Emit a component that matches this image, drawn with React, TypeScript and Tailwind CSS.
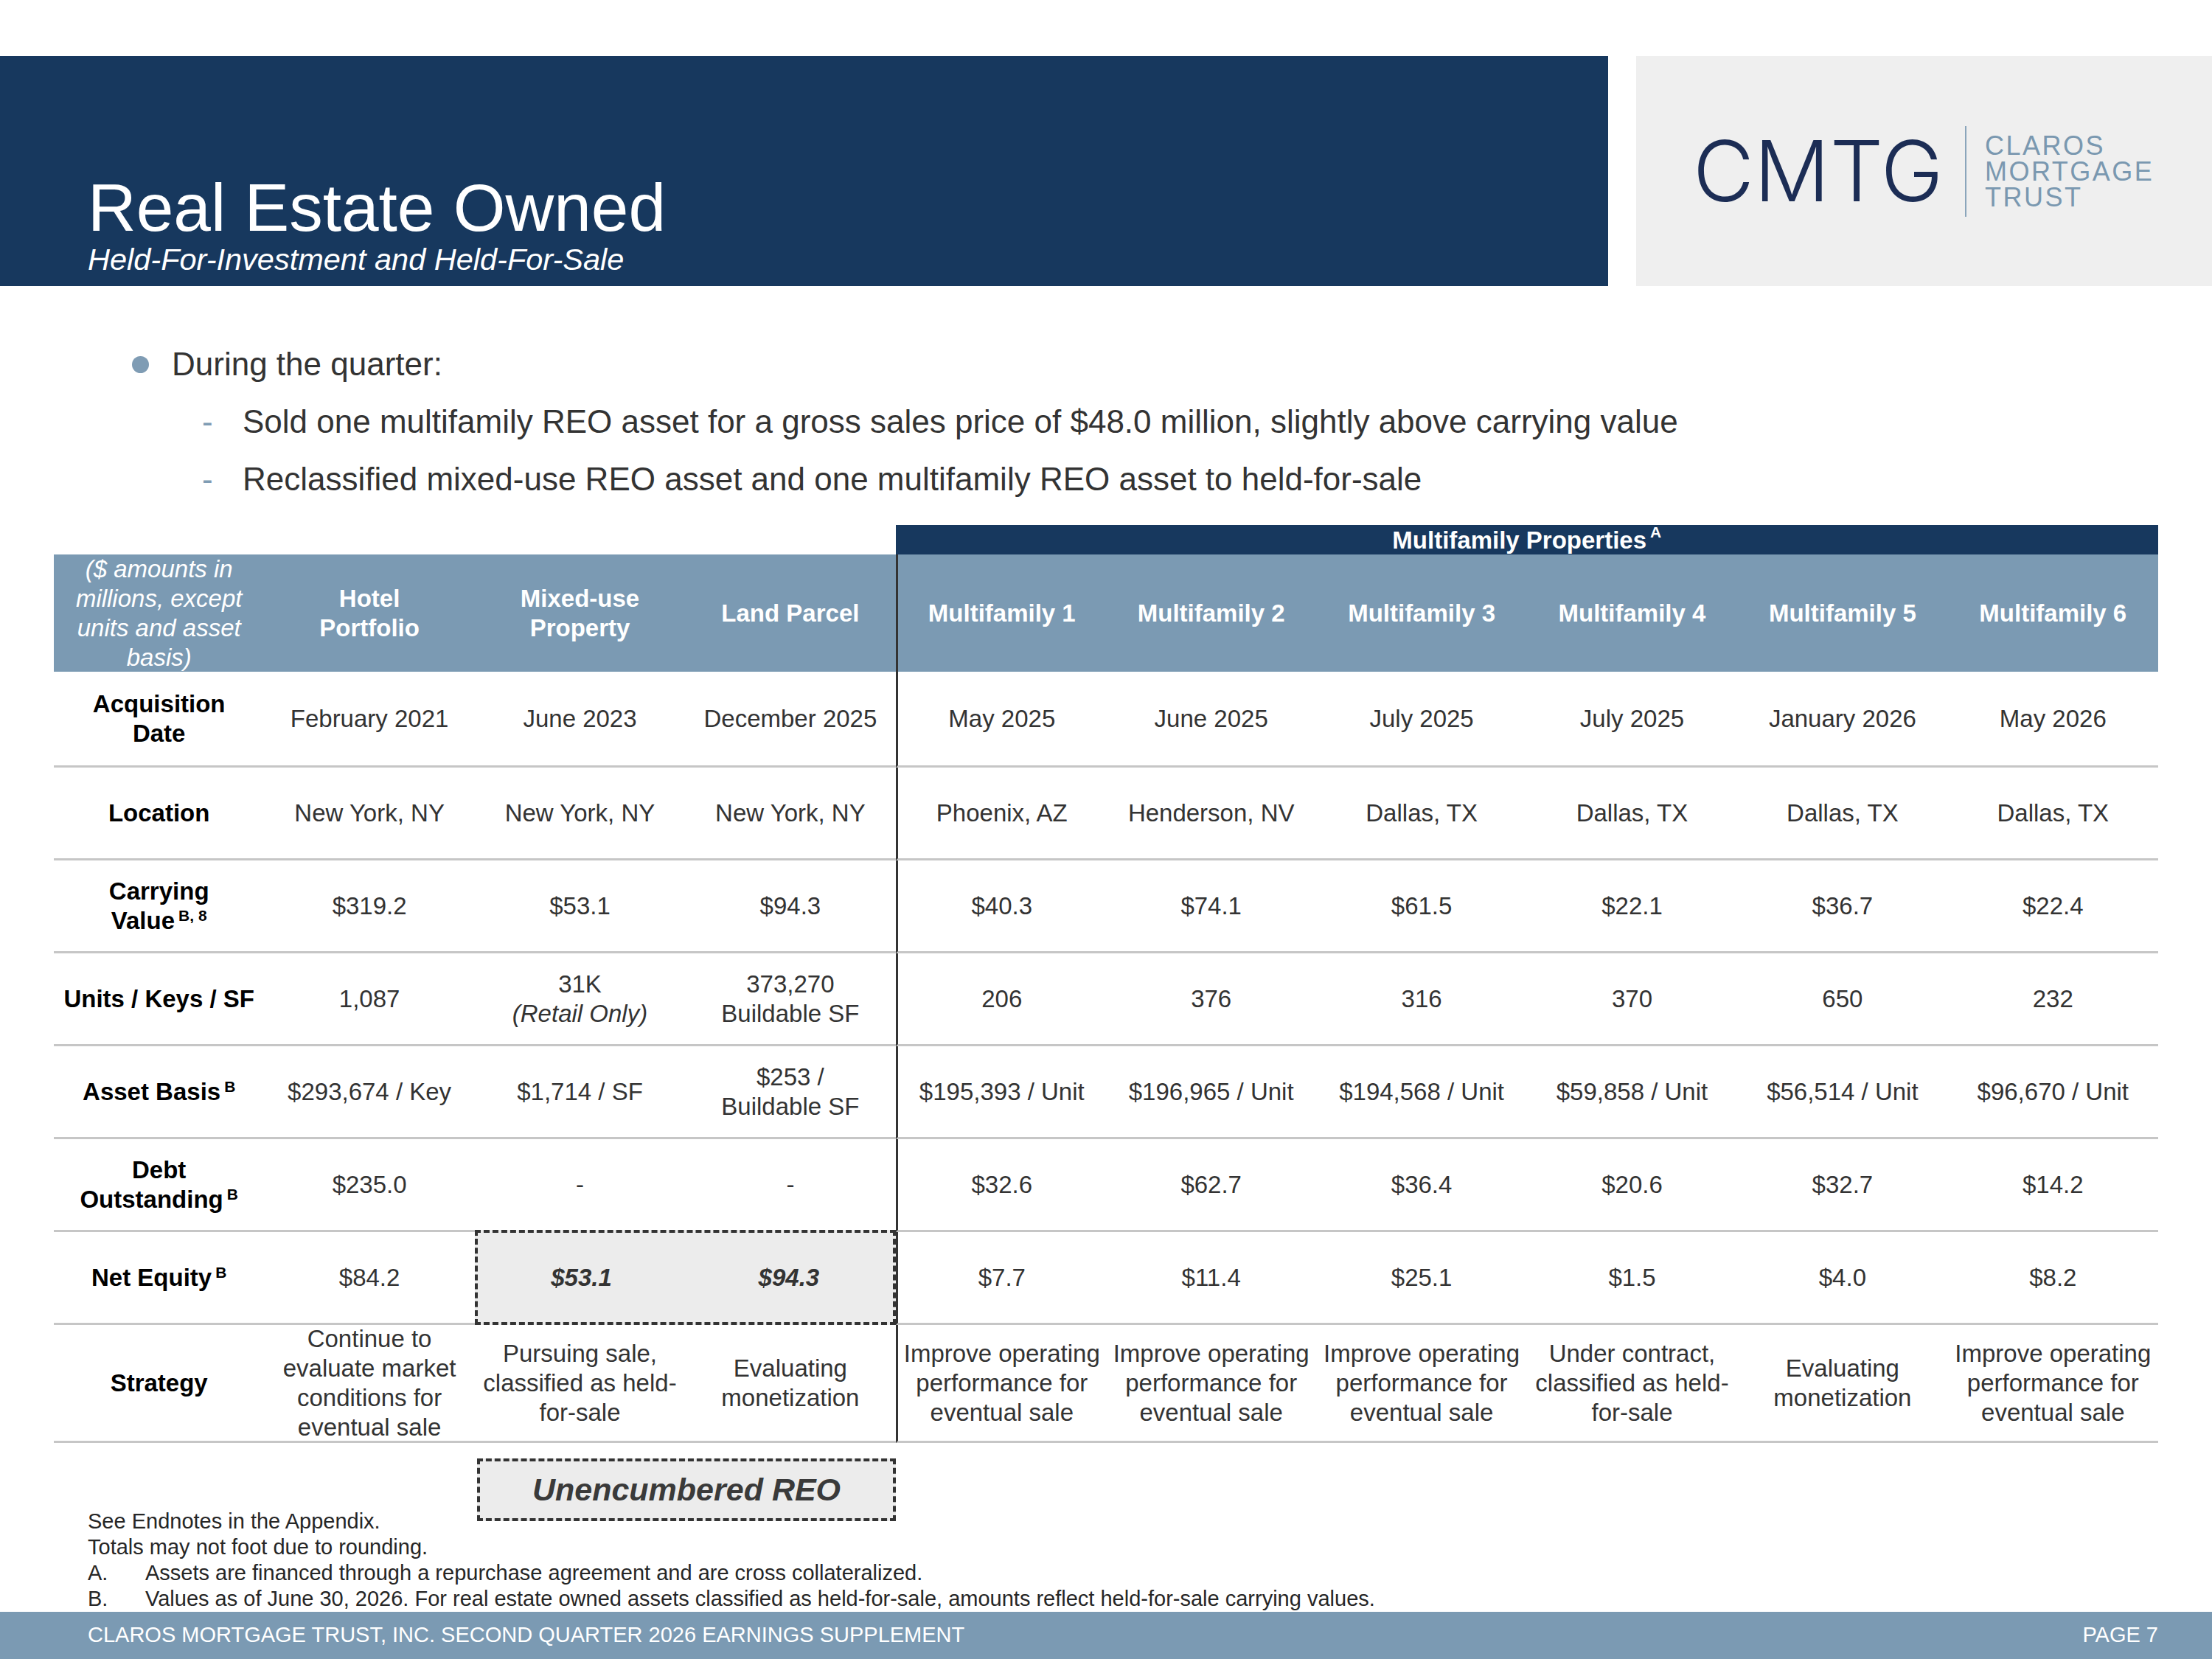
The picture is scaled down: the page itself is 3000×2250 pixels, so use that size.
import type { ReactNode } from "react";

type Row = {
  label: ReactNode;
  cells: ReactNode[];
};

function Sup({ children }: { children: ReactNode }) {
  return <sup className="ml-[5px] text-[21px]">{children}</sup>;
}

const rows: Row[] = [
  {
    label: (
      <>
        Acquisition
        <br />
        Date
      </>
    ),
    cells: [
      "February 2021",
      "June 2023",
      "December 2025",
      "May 2025",
      "June 2025",
      "July 2025",
      "July 2025",
      "January 2026",
      "May 2026",
    ],
  },
  {
    label: "Location",
    cells: [
      "New York, NY",
      "New York, NY",
      "New York, NY",
      "Phoenix, AZ",
      "Henderson, NV",
      "Dallas, TX",
      "Dallas, TX",
      "Dallas, TX",
      "Dallas, TX",
    ],
  },
  {
    label: (
      <>
        Carrying
        <br />
        Value<Sup>B, 8</Sup>
      </>
    ),
    cells: ["$319.2", "$53.1", "$94.3", "$40.3", "$74.1", "$61.5", "$22.1", "$36.7", "$22.4"],
  },
  {
    label: "Units / Keys / SF",
    cells: [
      "1,087",
      <>
        31K
        <br />
        <i>(Retail Only)</i>
      </>,
      <>
        373,270
        <br />
        Buildable SF
      </>,
      "206",
      "376",
      "316",
      "370",
      "650",
      "232",
    ],
  },
  {
    label: (
      <>
        Asset Basis<Sup>B</Sup>
      </>
    ),
    cells: [
      "$293,674 / Key",
      "$1,714 / SF",
      <>
        $253 /
        <br />
        Buildable SF
      </>,
      "$195,393 / Unit",
      "$196,965 / Unit",
      "$194,568 / Unit",
      "$59,858 / Unit",
      "$56,514 / Unit",
      "$96,670 / Unit",
    ],
  },
  {
    label: (
      <>
        Debt
        <br />
        Outstanding<Sup>B</Sup>
      </>
    ),
    cells: ["$235.0", "-", "-", "$32.6", "$62.7", "$36.4", "$20.6", "$32.7", "$14.2"],
  },
];

const strategies: string[][] = [
  ["Continue to", "evaluate market", "conditions for", "eventual sale"],
  ["Pursuing sale,", "classified as held-", "for-sale"],
  ["Evaluating", "monetization"],
  ["Improve operating", "performance for", "eventual sale"],
  ["Improve operating", "performance for", "eventual sale"],
  ["Improve operating", "performance for", "eventual sale"],
  ["Under contract,", "classified as held-", "for-sale"],
  ["Evaluating", "monetization"],
  ["Improve operating", "performance for", "eventual sale"],
];

const headers: ReactNode[] = [
  <>
    Hotel
    <br />
    Portfolio
  </>,
  <>
    Mixed-use
    <br />
    Property
  </>,
  "Land Parcel",
  "Multifamily 1",
  "Multifamily 2",
  "Multifamily 3",
  "Multifamily 4",
  "Multifamily 5",
  "Multifamily 6",
];

function Cell({
  col,
  height,
  label,
  children,
}: {
  col: number;
  height: "h-[126px]" | "h-[130px]" | "h-[160px]";
  label?: boolean;
  children: ReactNode;
}) {
  return (
    <div
      className={`flex ${height} items-center justify-center whitespace-nowrap border-b-[3px] border-b-[#c6c6c6] text-center leading-[40px] ${
        col === 4 ? "border-l-[3px] border-l-[#333333]" : ""
      } ${label ? "font-bold text-black" : "text-[#333333]"}`}
    >
      <div>{children}</div>
    </div>
  );
}

export default function App() {
  return (
    <div className="relative flex h-[2250px] w-[3000px] flex-col overflow-hidden bg-white font-['Liberation_Sans',Arial,sans-serif]">
      {/* Header */}
      <div className="mt-[76px] flex h-[312px]">
        <div className="w-[2181px] bg-[#17385e] pl-[119px] pt-[160px] text-white">
          <h1 className="text-[91px] leading-none">Real Estate Owned</h1>
          <p className="mt-[4px] text-[41.5px] italic leading-none">Held-For-Investment and Held-For-Sale</p>
        </div>
        <div className="ml-[38px] flex flex-1 items-center bg-[#efefef] pl-[77px]">
          <span className="w-[339px] font-['Inter',sans-serif] text-[114px] font-light leading-none text-[#1c2d55]">
            CMTG
          </span>
          <div className="ml-[30px] h-[123px] w-[2px] bg-[#8aa5bb]" />
          <div className="ml-[25px] text-[36px] leading-[35px] tracking-[2.5px] text-[#7a98b0]">
            <div>CLAROS</div>
            <div>MORTGAGE</div>
            <div>TRUST</div>
          </div>
        </div>
      </div>

      {/* Bullets */}
      <div className="mt-[67px] text-[44px] leading-[78px] text-[#333333]">
        <div className="flex items-center pl-[179px]">
          <span className="h-[23px] w-[23px] rounded-full bg-[#7f9cb4]" />
          <span className="ml-[31px]">During the quarter:</span>
        </div>
        <div className="flex pl-[274px]">
          <span className="w-[55px] text-[#7f9cb4]">-</span>
          <span>Sold one multifamily REO asset for a gross sales price of $48.0 million, slightly above carrying value</span>
        </div>
        <div className="flex pl-[274px]">
          <span className="w-[55px] text-[#7f9cb4]">-</span>
          <span>Reclassified mixed-use REO asset and one multifamily REO asset to held-for-sale</span>
        </div>
      </div>

      {/* Table */}
      <div className="ml-[73px] mt-[23px] w-[2854px] text-[33px]">
        <div className="grid h-[40px] grid-cols-10">
          <div className="col-span-4" />
          <div className="col-span-6 flex items-center justify-center bg-[#17385e] font-bold leading-none text-white">
            Multifamily Properties<Sup>A</Sup>
          </div>
        </div>

        <div className="grid h-[159px] grid-cols-10 bg-[#7b9ab3] text-white">
          <div className="flex items-center justify-center text-center italic leading-[40px]">
            <div>
              ($ amounts in
              <br />
              millions, except
              <br />
              units and asset
              <br />
              basis)
            </div>
          </div>
          {headers.map((h, i) => (
            <div
              key={i}
              className={`flex items-center justify-center whitespace-nowrap text-center font-bold leading-[40px] ${
                i === 3 ? "border-l-[3px] border-l-[#333333]" : ""
              }`}
            >
              <div>{h}</div>
            </div>
          ))}
        </div>

        {rows.map((row, r) => (
          <div key={r} className="grid grid-cols-10">
            <Cell col={0} height={r === 0 ? "h-[130px]" : "h-[126px]"} label>
              {row.label}
            </Cell>
            {row.cells.map((c, i) => (
              <Cell key={i} col={i + 1} height={r === 0 ? "h-[130px]" : "h-[126px]"}>
                {c}
              </Cell>
            ))}
          </div>
        ))}

        {/* Net equity */}
        <div className="grid grid-cols-10">
          <Cell col={0} height="h-[126px]" label>
            Net Equity<Sup>B</Sup>
          </Cell>
          <Cell col={1} height="h-[126px]">
            $84.2
          </Cell>
          <div className="relative col-span-2 -mt-[3px] grid h-[129px] grid-cols-2 border-[4px] border-dashed border-[#333333] bg-[#ececec] font-bold italic text-[#333333]">
            <div className="flex items-center justify-center">$53.1</div>
            <div className="flex items-center justify-center">$94.3</div>
          </div>
          {["$7.7", "$11.4", "$25.1", "$1.5", "$4.0", "$8.2"].map((v, i) => (
            <Cell key={i} col={i + 4} height="h-[126px]">
              {v}
            </Cell>
          ))}
        </div>

        {/* Strategy */}
        <div className="grid grid-cols-10">
          <Cell col={0} height="h-[160px]" label>
            Strategy
          </Cell>
          {strategies.map((lines, i) => (
            <Cell key={i} col={i + 1} height="h-[160px]">
              {lines.map((l, j) => (
                <div key={j}>{l}</div>
              ))}
            </Cell>
          ))}
        </div>
      </div>

      {/* Unencumbered box */}
      <div className="ml-[647px] mt-[21px] flex h-[85px] w-[568px] items-center justify-center border-[4px] border-dashed border-[#333333] bg-[#ececec] text-[43px] font-bold italic text-[#3a3a3a]">
        Unencumbered REO
      </div>

      {/* Footnotes */}
      <div className="-mt-[17px] pl-[119px] text-[29px] leading-[35px] text-[#262626]">
        <div>See Endnotes in the Appendix.</div>
        <div>Totals may not foot due to rounding.</div>
        <div className="flex">
          <span className="w-[78px]">A.</span>
          <span>Assets are financed through a repurchase agreement and are cross collateralized.</span>
        </div>
        <div className="flex">
          <span className="w-[78px]">B.</span>
          <span>
            Values as of June 30, 2026. For real estate owned assets classified as held-for-sale, amounts reflect
            held-for-sale carrying values.
          </span>
        </div>
      </div>

      {/* Footer */}
      <div className="flex h-[64px] items-center justify-between bg-[#7b9ab3] pl-[119px] pr-[73px] text-[29px] text-white">
        <span>CLAROS MORTGAGE TRUST, INC. SECOND QUARTER 2026 EARNINGS SUPPLEMENT</span>
        <span>PAGE 7</span>
      </div>
    </div>
  );
}
